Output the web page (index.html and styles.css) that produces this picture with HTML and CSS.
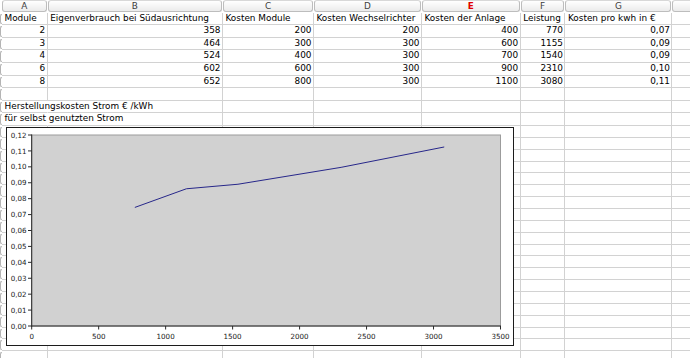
FILE: index.html
```html
<!DOCTYPE html>
<html lang="de">
<head>
<meta charset="utf-8">
<title>Tabelle</title>
<link rel="stylesheet" href="styles.css">
</head>
<body>
<div class="sheet">
  <div class="row hd"><i></i><b>A</b><b>B</b><b>C</b><b>D</b><b class="act">E</b><b>F</b><b>G</b><b></b></div>
  <div class="row t"><i class="rh"></i><span>Module</span><span>Eigenverbrauch bei Südausrichtung</span><span>Kosten Module</span><span>Kosten Wechselrichter</span><span>Kosten der Anlage</span><span>Leistung</span><span>Kosten pro kwh in €</span><span></span></div>
  <div class="row t"><i class="rh"></i><span class="n">2</span><span class="n">358</span><span class="n">200</span><span class="n">200</span><span class="n">400</span><span class="n">770</span><span class="n">0,07</span><span></span></div>
  <div class="row t"><i class="rh"></i><span class="n">3</span><span class="n">464</span><span class="n">300</span><span class="n">300</span><span class="n">600</span><span class="n">1155</span><span class="n">0,09</span><span></span></div>
  <div class="row t"><i class="rh"></i><span class="n">4</span><span class="n">524</span><span class="n">400</span><span class="n">300</span><span class="n">700</span><span class="n">1540</span><span class="n">0,09</span><span></span></div>
  <div class="row t"><i class="rh"></i><span class="n">6</span><span class="n">602</span><span class="n">600</span><span class="n">300</span><span class="n">900</span><span class="n">2310</span><span class="n">0,10</span><span></span></div>
  <div class="row t"><i class="rh"></i><span class="n">8</span><span class="n">652</span><span class="n">800</span><span class="n">300</span><span class="n">1100</span><span class="n">3080</span><span class="n">0,11</span><span></span></div>
  <div class="row t"><i class="rh"></i><span></span><span></span><span></span><span></span><span></span><span></span><span></span><span></span></div>
  <div class="row t"><i class="rh"></i><span class="ov">Herstellungskosten Strom € /kWh</span><span></span><span></span><span></span><span></span><span></span><span></span><span></span></div>
  <div class="row t"><i class="rh"></i><span class="ov">für selbst genutzten Strom</span><span></span><span></span><span></span><span></span><span></span><span></span><span></span></div>
  <div class="row e"><i class="rh"></i><span></span><span></span><span></span><span></span><span></span><span></span><span></span><span></span></div>
  <div class="row e"><i class="rh"></i><span></span><span></span><span></span><span></span><span></span><span></span><span></span><span></span></div>
  <div class="row e"><i class="rh"></i><span></span><span></span><span></span><span></span><span></span><span></span><span></span><span></span></div>
  <div class="row e"><i class="rh"></i><span></span><span></span><span></span><span></span><span></span><span></span><span></span><span></span></div>
  <div class="row e"><i class="rh"></i><span></span><span></span><span></span><span></span><span></span><span></span><span></span><span></span></div>
  <div class="row e"><i class="rh"></i><span></span><span></span><span></span><span></span><span></span><span></span><span></span><span></span></div>
  <div class="row e"><i class="rh"></i><span></span><span></span><span></span><span></span><span></span><span></span><span></span><span></span></div>
  <div class="row e"><i class="rh"></i><span></span><span></span><span></span><span></span><span></span><span></span><span></span><span></span></div>
  <div class="row e"><i class="rh"></i><span></span><span></span><span></span><span></span><span></span><span></span><span></span><span></span></div>
  <div class="row e"><i class="rh"></i><span></span><span></span><span></span><span></span><span></span><span></span><span></span><span></span></div>
  <div class="row e"><i class="rh"></i><span></span><span></span><span></span><span></span><span></span><span></span><span></span><span></span></div>
  <div class="row e"><i class="rh"></i><span></span><span></span><span></span><span></span><span></span><span></span><span></span><span></span></div>
  <div class="row e"><i class="rh"></i><span></span><span></span><span></span><span></span><span></span><span></span><span></span><span></span></div>
  <div class="row e"><i class="rh"></i><span></span><span></span><span></span><span></span><span></span><span></span><span></span><span></span></div>
  <div class="row e"><i class="rh"></i><span></span><span></span><span></span><span></span><span></span><span></span><span></span><span></span></div>
  <div class="row e"><i class="rh"></i><span></span><span></span><span></span><span></span><span></span><span></span><span></span><span></span></div>
  <div class="row e"><i class="rh"></i><span></span><span></span><span></span><span></span><span></span><span></span><span></span><span></span></div>
  <div class="row e"><i class="rh"></i><span></span><span></span><span></span><span></span><span></span><span></span><span></span><span></span></div>
  <div class="row e"><i class="rh"></i><span></span><span></span><span></span><span></span><span></span><span></span><span></span><span></span></div>
  <div class="row e"><i class="rh"></i><span></span><span></span><span></span><span></span><span></span><span></span><span></span><span></span></div>

  <div class="chart">
    <svg width="506" height="217" viewBox="7 128 506 217" xmlns="http://www.w3.org/2000/svg">
      <rect x="31.7" y="135" width="468.8" height="191" fill="#d1d1d1" stroke="#9c9c9c" stroke-width="1"/>
      <g stroke="#2a2a2a" stroke-width="1">
        <line x1="31.7" y1="134.5" x2="31.7" y2="326.5"/>
        <line x1="31.2" y1="326" x2="501" y2="326"/>
        <line x1="28" y1="326" x2="31.7" y2="326"/>
        <line x1="28" y1="310.08" x2="31.7" y2="310.08"/>
        <line x1="28" y1="294.17" x2="31.7" y2="294.17"/>
        <line x1="28" y1="278.25" x2="31.7" y2="278.25"/>
        <line x1="28" y1="262.33" x2="31.7" y2="262.33"/>
        <line x1="28" y1="246.42" x2="31.7" y2="246.42"/>
        <line x1="28" y1="230.5" x2="31.7" y2="230.5"/>
        <line x1="28" y1="214.58" x2="31.7" y2="214.58"/>
        <line x1="28" y1="198.67" x2="31.7" y2="198.67"/>
        <line x1="28" y1="182.75" x2="31.7" y2="182.75"/>
        <line x1="28" y1="166.83" x2="31.7" y2="166.83"/>
        <line x1="28" y1="150.92" x2="31.7" y2="150.92"/>
        <line x1="28" y1="135" x2="31.7" y2="135"/>
        <line x1="31.7" y1="326" x2="31.7" y2="329.5"/>
        <line x1="98.67" y1="326" x2="98.67" y2="329.5"/>
        <line x1="165.64" y1="326" x2="165.64" y2="329.5"/>
        <line x1="232.61" y1="326" x2="232.61" y2="329.5"/>
        <line x1="299.58" y1="326" x2="299.58" y2="329.5"/>
        <line x1="366.55" y1="326" x2="366.55" y2="329.5"/>
        <line x1="433.52" y1="326" x2="433.52" y2="329.5"/>
        <line x1="500.5" y1="326" x2="500.5" y2="329.5"/>
      </g>
      <polyline points="134.83,207.43 186.4,188.78 237.97,184.24 341.1,167.35 444.24,146.98" fill="none" stroke="#27278a" stroke-width="1"/>
      <g class="ax ay">
        <text x="26.5" y="328.6">0,00</text>
        <text x="26.5" y="312.7">0,01</text>
        <text x="26.5" y="296.8">0,02</text>
        <text x="26.5" y="280.9">0,03</text>
        <text x="26.5" y="264.9">0,04</text>
        <text x="26.5" y="249">0,05</text>
        <text x="26.5" y="233.1">0,06</text>
        <text x="26.5" y="217.2">0,07</text>
        <text x="26.5" y="201.3">0,08</text>
        <text x="26.5" y="185.4">0,09</text>
        <text x="26.5" y="169.4">0,10</text>
        <text x="26.5" y="153.5">0,11</text>
        <text x="26.5" y="137.6">0,12</text>
      </g>
      <g class="ax axx">
        <text x="31.7" y="338.5">0</text>
        <text x="98.67" y="338.5">500</text>
        <text x="165.64" y="338.5">1000</text>
        <text x="232.61" y="338.5">1500</text>
        <text x="299.58" y="338.5">2000</text>
        <text x="366.55" y="338.5">2500</text>
        <text x="433.52" y="338.5">3000</text>
        <text x="500.5" y="338.5">3500</text>
      </g>
    </svg>
  </div>
</div>
</body>
</html>
```
FILE: styles.css
```css
html, body {
  margin: 0;
  padding: 0;
  background: #fff;
}
body {
  font-family: "DejaVu Sans", "Noto Sans", sans-serif;
  font-size: 8.9px;
  color: #000;
  overflow: hidden;
}
.sheet {
  position: relative;
  width: 690px;
  height: 358px;
  overflow: hidden;
}
.row {
  display: grid;
  grid-template-columns: 2px 45.7px 175.3px 91px 108px 98.7px 44.8px 107px 40px;
  box-sizing: border-box;
}
.row.hd { height: 12.6px; }
.row.t { height: 12.6px; }
.row.e { height: 11.87px; }

.row > span {
  box-sizing: border-box;
  border-right: 1px solid #d2d2d2;
  border-bottom: 1px solid #d2d2d2;
  padding: 0 2px 0 2.5px;
  line-height: 11.4px;
  white-space: nowrap;
}
.row > span.n { text-align: right; padding-right: 1.5px; }
.row > span.ov { border-right-color: transparent; overflow: visible; }

.rh {
  display: block;
  box-sizing: border-box;
  margin: 1px 0 1px 0;
  border: 1px solid #b4b4b4;
  border-right: 0;
  border-radius: 3px 0 0 3px;
}

.hd > b {
  display: block;
  box-sizing: border-box;
  margin: 0 1px 0 0;
  height: 12px;
  border: 1px solid #bdbdbd;
  border-top-color: #d8d8d8;
  border-radius: 3px;
  background: linear-gradient(#ffffff, #ebebeb);
  font-weight: normal;
  text-align: center;
  color: #3c3c3c;
  line-height: 10px;
  font-size: 8.9px;
}
.hd > b.act { color: #e00000; font-weight: bold; }

.chart {
  position: absolute;
  left: 6px;
  top: 127px;
  width: 508px;
  height: 219px;
  box-sizing: border-box;
  border: 1px solid #1c1c1c;
  background: #fff;
}
.chart svg { display: block; }
.ax text {
  font-family: "DejaVu Sans", sans-serif;
  font-size: 7.1px;
  fill: #1a1a1a;
}
.ay text { text-anchor: end; }
.axx text { text-anchor: middle; }
```
